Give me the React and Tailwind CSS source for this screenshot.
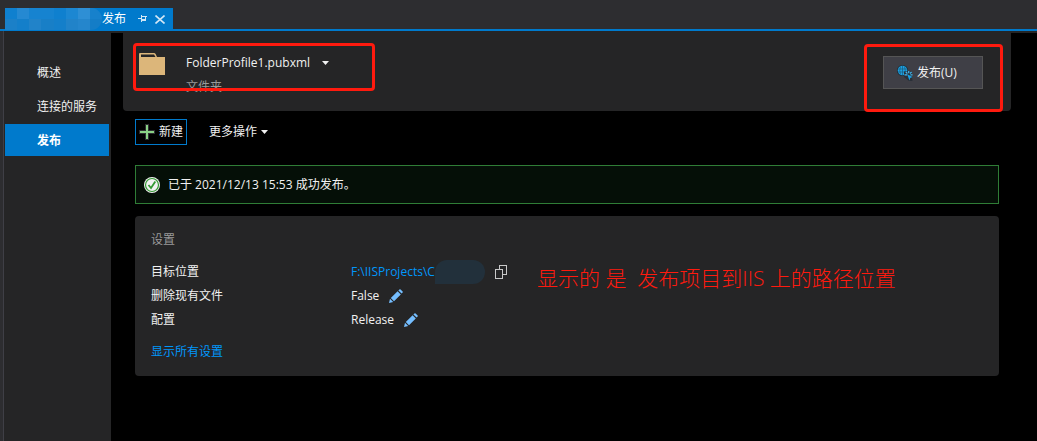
import clsx from 'clsx'

const navItems = [
    { label: '概述', active: false },
    { label: '连接的服务', active: false },
    { label: '发布', active: true },
]

const settings = [
    { label: '目标位置', value: 'F:\\IISProjects\\C', type: 'path' },
    { label: '删除现有文件', value: 'False', type: 'edit' },
    { label: '配置', value: 'Release', type: 'edit' },
]

function PinIcon() {
    return (
        <svg width="9" height="8" viewBox="0 0 9 8" fill="none" stroke="#d0e6f5" shapeRendering="crispEdges">
            <path d="M0 3.5H3M3.5 0V7M4 1.5H8.5M4 4.5H8M4 5.5H8M7.5 1V6" />
        </svg>
    )
}

function CloseIcon() {
    return (
        <svg width="10" height="9" viewBox="0 0 10 9" fill="none" stroke="#d0e6f5" strokeWidth="1.6">
            <path d="M0.5 0.5L9.5 8.5M9.5 0.5L0.5 8.5" />
        </svg>
    )
}

function FolderIcon() {
    return (
        <svg width="26" height="22" viewBox="0 0 26 22">
            <path d="M0 1Q0 0 1 0H15Q16 0 16.6 1L18 4H26V22H0Z" fill="#dcb67a" />
            <path d="M2 1.5H15L16.5 4H2Z" fill="#252526" />
        </svg>
    )
}

function CaretIcon() {
    return (
        <svg width="7" height="4" viewBox="0 0 7 4">
            <path d="M0 0H7L3.5 4Z" fill="#f1f1f1" />
        </svg>
    )
}

function PlusIcon() {
    return (
        <svg width="16" height="16" viewBox="0 0 16 16">
            <path d="M6 0H10V6H16V10H10V16H6V10H0V6H6Z" fill="#2d2d30" />
            <path d="M7 1H9V7H15V9H9V15H7V9H1V7H7Z" fill="#89d185" />
        </svg>
    )
}

function PublishIcon() {
    return (
        <svg width="16" height="16" viewBox="0 0 16 16" fill="none">
            <circle cx="5.5" cy="5.5" r="5.5" fill="#1f2a33" />
            <circle cx="5.5" cy="5.5" r="4.8" fill="#1ba1e2" />
            <path d="M1 4H10M1 7H10M5.5 1V10M3.5 1.5Q2 5.5 3.5 9.5M7.5 1.5Q9 5.5 7.5 9.5" stroke="#1f4f6c" strokeWidth="0.6" />
            <path d="M7 6.5H15V11L15.5 16H12L7 12Z" fill="#2a3038" />
            <path d="M10 9L12.5 15.5L13.2 13L15.5 12Z" fill="#1ba1e2" />
            <path d="M7.5 9.8H10M8.8 7L10.4 8.5M11.7 6V8.2M14.6 7L13 8.5M13.4 9.8H15.5" stroke="#45b8f0" strokeWidth="1.2" />
        </svg>
    )
}

function SuccessIcon() {
    return (
        <svg width="16" height="16" viewBox="0 0 16 16" fill="none">
            <circle cx="8" cy="8" r="8" fill="#f1f1f1" />
            <circle cx="8" cy="8" r="6.5" stroke="#339933" strokeWidth="1.2" />
            <path d="M4.5 8L7 11L11.3 4.5" stroke="#339933" strokeWidth="1.8" />
        </svg>
    )
}

function CopyIcon() {
    return (
        <svg width="12" height="14" viewBox="0 0 12 14" fill="none" stroke="#c8c8c8" shapeRendering="crispEdges">
            <path d="M0.5 4.5H7.5V13.5H0.5ZM4.5 4V0.5H11.5V9.5H8" />
        </svg>
    )
}

function PencilIcon() {
    return (
        <svg width="14" height="14" viewBox="0 0 14 14" fill="#75beff">
            <path d="M0 14L1 9.8L4.2 13ZM1.8 9L8.6 2.2L11.8 5.4L5 12.2ZM9.4 1.4L10.4 0.4Q11 -0.1 11.6 0.4L13.6 2.4Q14.1 3 13.6 3.6L12.6 4.6Z" />
        </svg>
    )
}

function TabBar() {
    return (
        <div className="h-[31px] pl-[5px] pt-2 flex border-b-2 border-[#007acc]">
            <div className="h-[22px] flex items-center bg-[#007acc] text-white">
                <div className="w-[97px] h-full grid grid-cols-8 grid-rows-2">
                    <span className="bg-[#0f80cf]" />
                    <span className="bg-[#2589d2]" />
                    <span className="bg-[#1683d0]" />
                    <span className="bg-[#1683d0]" />
                    <span className="bg-[#0f80cf]" />
                    <span className="bg-[#1c87d2]" />
                    <span className="bg-[#2e8fd5]" />
                    <span className="bg-[#1781cc] rounded-tr-full" />
                    <span className="bg-[#1b80c8]" />
                    <span className="bg-[#147fca]" />
                    <span className="bg-[#2183c9]" />
                    <span className="bg-[#187fc7]" />
                    <span className="bg-[#147fca]" />
                    <span className="bg-[#2183c9]" />
                    <span className="bg-[#2586cc]" />
                    <span className="bg-[#147dc7] rounded-br-full" />
                </div>
                <span>发布</span>
                <button type="button" aria-label="固定" className="ml-3"><PinIcon /></button>
                <button type="button" aria-label="关闭" className="ml-2 mr-2"><CloseIcon /></button>
            </div>
        </div>
    )
}

function Sidebar() {
    return (
        <nav className="w-[108px] shrink-0 pl-px pr-0.5 pt-[25px] flex flex-col gap-0.5 bg-[#252526] border-l border-[#3f3f46]">
            {
                navItems.map((item) => (
                    <a key={item.label} href="#" className={clsx('h-8 pt-0.5 pl-8 flex items-center', item.active ? 'bg-[#007acc] font-bold text-white' : 'text-[#f1f1f1]')}>
                        {item.label}
                    </a>
                ))
            }
        </nav>
    )
}

function ProfileHeader() {
    return (
        <header className="relative h-[78px] px-4 flex justify-between bg-[#252526] rounded-b">
            <div className="pt-5 flex">
                <FolderIcon />
                <div className="ml-[21px]">
                    <button type="button" className="h-5 flex items-center gap-3">
                        FolderProfile1.pubxml
                        <CaretIcon />
                    </button>
                    <div className="mt-1 h-5 leading-5 text-[#999999]">文件夹</div>
                </div>
            </div>
            <button type="button" className="mt-[23px] mr-3 w-[100px] h-[33px] pl-[13px] flex items-center gap-1 bg-[#3f3f46] border border-[#555555]">
                <PublishIcon />
                发布(U)
            </button>
            <div className="absolute left-2.5 top-2.5 w-[242px] h-12 border-3 border-[#ff1a0e] rounded-sm" />
            <div className="absolute right-2 top-[11px] w-[139px] h-[68px] border-3 border-[#ff1a0e] rounded-sm" />
        </header>
    )
}

function SettingsCard() {
    return (
        <section className="relative mt-3 px-4 pt-3 pb-3 bg-[#252526] rounded">
            <h2 className="h-6 leading-6 text-[#999999]">设置</h2>
            <dl className="mt-2">
                {
                    settings.map((row) => (
                        <div key={row.label} className="h-6 flex items-center">
                            <dt className="w-[200px]">{row.label}</dt>
                            {
                                row.type === 'path' ? (
                                    <dd className="flex items-center">
                                        <a href="#" className="text-[#0097fb]">{row.value}</a>
                                        <span className="w-[50px] h-6 bg-[#22303b] rounded-full rounded-bl-lg" />
                                        <button type="button" aria-label="复制" className="ml-2.5"><CopyIcon /></button>
                                    </dd>
                                ) : (
                                    <dd className="flex items-center gap-2.5">
                                        {row.value}
                                        <button type="button" aria-label="编辑"><PencilIcon /></button>
                                    </dd>
                                )
                            }
                        </div>
                    ))
                }
            </dl>
            <a href="#" className="mt-2 h-6 flex items-center text-[#0097fb]">显示所有设置</a>
            <p className="absolute left-[402px] top-[46px] text-[21px] leading-8 font-light whitespace-pre text-[#ff1a0e]">
                {'显示的 是  发布项目到IIS 上的路径位置'}
            </p>
        </section>
    )
}

export default function App() {
    return (
        <div className="min-h-screen flex flex-col bg-[#2d2d30] font-['Open_Sans','Noto_Sans_CJK_SC',sans-serif] text-xs text-[#f1f1f1]">
            <TabBar />
            <div className="flex-1 flex pl-[3px]">
                <Sidebar />
                <main className="flex-1 flex flex-col bg-black border-t-2 border-[#252526]">
                    <div className="pl-3 pr-[26px]">
                        <ProfileHeader />
                        <div className="px-3">
                            <div className="mt-2 flex items-center gap-[22px]">
                                <button type="button" className="h-[26px] px-[3px] flex items-center gap-1 border border-[#007acc]">
                                    <PlusIcon />
                                    新建
                                </button>
                                <button type="button" className="flex items-center gap-1">
                                    更多操作
                                    <CaretIcon />
                                </button>
                            </div>
                            <div role="status" className="mt-5 h-[39px] px-2 flex items-center gap-2 bg-[#050f07] border border-[#2f7d36]">
                                <SuccessIcon />
                                已于 2021/12/13 15:53 成功发布。
                            </div>
                            <SettingsCard />
                        </div>
                    </div>
                </main>
            </div>
        </div>
    )
}
